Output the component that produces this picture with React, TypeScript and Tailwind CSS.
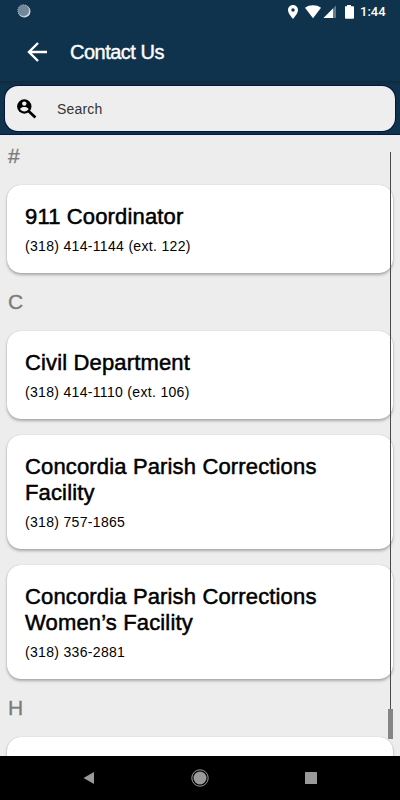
import React from "react";

interface Contact {
  name: string;
  phone: string;
}

interface Section {
  letter: string;
  contacts: Contact[];
}

const sections: Section[] = [
  {
    letter: "#",
    contacts: [{ name: "911 Coordinator", phone: "(318) 414-1144 (ext. 122)" }],
  },
  {
    letter: "C",
    contacts: [
      { name: "Civil Department", phone: "(318) 414-1110 (ext. 106)" },
      { name: "Concordia Parish Corrections Facility", phone: "(318) 757-1865" },
      { name: "Concordia Parish Corrections Women’s Facility", phone: "(318) 336-2881" },
    ],
  },
  { letter: "H", contacts: [{ name: "", phone: "" }] },
];

function StatusBar() {
  return (
    <div className="flex h-6 items-center justify-between pl-[17px] pr-[15px] text-white">
      <svg className="-mt-0.5" width="14" height="14" viewBox="0 0 14 14">
        <circle cx="7.3" cy="7.3" r="6.2" fill="#d3dce2" />
        <circle cx="6.5" cy="6.5" r="5.7" fill="#71889a" />
        <circle cx="6.5" cy="6.5" r="5.7" fill="none" stroke="#a9b7c1" strokeWidth="1" strokeDasharray="1 1" />
      </svg>
      <div className="flex items-center">
        <svg className="-mt-px" width="74" height="16" viewBox="0 0 74 16" fill="currentColor">
          <path
            fillRule="evenodd"
            d="M7 1C4.200 1 2 3.200 2 6c0 3.600 5 9 5 9s5-5.400 5-9c0-2.800-2.200-5-5-5zm0 3.300a1.700 1.700 0 1 1 0 3.400 1.700 1.700 0 0 1 0-3.400z"
          />
          <path d="M19 3.700C21.200 2 24 1.200 27 1.200s5.800.8 8 2.500L27 14.200z" />
          <path d="M50 1.500V14H37.500z" fillOpacity=".35" />
          <path d="M47 4.500V14h-9.500z" />
          <path d="M59 2.300h2V1h4v1.300h2.200a.8.800 0 0 1 .8.800v10.800a.8.800 0 0 1-.8.800h-7.400a.8.800 0 0 1-.8-.8z" />
        </svg>
        <span className="w-[25px] whitespace-nowrap font-[Roboto,sans-serif] text-[13px] font-medium leading-4">
          1:44
        </span>
      </div>
    </div>
  );
}

function SearchBar() {
  return (
    <div className="h-[54px] border-b border-[#06164a] bg-linear-to-b from-[#0e293d] to-[#10334d] to-[4px] px-[5px] pt-[5px]">
      <div className="flex h-[45px] items-center rounded-[13px] bg-[#eeeeee] pl-3 shadow-[0_0_1px_1px_#04153a]">
        <svg width="20" height="20" viewBox="0 0 20 20">
          <path d="M11.500 12L18.400 18.600" stroke="#000" strokeWidth="2.700" />
          <circle cx="7.300" cy="7.500" r="7.200" />
          <circle cx="7.300" cy="4.600" r="2.200" fill="#eee" />
          <path d="M3 10c.6-1.500 2.600-2.100 4.300-2.100s3.700.6 4.300 2.100C10.700 11.500 9.100 12.400 7.300 12.400S3.900 11.500 3 10z" fill="#eee" />
        </svg>
        <span className="ml-5 text-[14px] leading-5 tracking-[0.2px] text-[#333]">Search</span>
      </div>
    </div>
  );
}

function ContactCard({ name, phone }: Contact) {
  return (
    <div className="mx-[7px] mb-4 min-h-[88px] rounded-[14px] bg-white px-[18px] pb-[17px] pt-[19px] shadow-[0_2px_3px_rgba(0,0,0,0.28),0_0_1px_rgba(0,0,0,0.25)]">
      <h2 className="w-[310px] text-[22px] leading-[26px] tracking-[0.15px] text-black [-webkit-text-stroke:0.5px_#000]">
        {name}
      </h2>
      <p className="mt-1.5 text-[14px] leading-5 tracking-[0.32px] text-black">{phone}</p>
    </div>
  );
}

export default function App() {
  return (
    <div className="flex h-[800px] w-[400px] flex-col overflow-hidden bg-[#ededed] font-['Liberation_Sans',Arial,sans-serif]">
      <header className="h-[81px] shrink-0 bg-[#10334d]">
        <StatusBar />
        <div className="flex h-[56px] items-center pl-[27px]">
          <svg width="20" height="20" viewBox="0 0 20 20" fill="none" stroke="#fff" strokeWidth="2.400">
            <path d="M20 10H2M11 1L2 10l9 9" />
          </svg>
          <h1 className="ml-[23px] text-[20px] leading-6 tracking-[-0.5px] text-white [-webkit-text-stroke:0.4px_#fff]">
            Contact Us
          </h1>
        </div>
      </header>
      <SearchBar />

      <main className="relative min-h-0 flex-1 overflow-hidden pt-2">
        {sections.map((section) => (
          <section key={section.letter}>
            <h3 className="h-[42px] pl-2 pt-px text-[21px] leading-6 text-[#7b7b7b] [-webkit-text-stroke:0.3px_#7b7b7b]">
              {section.letter}
            </h3>
            {section.contacts.map((contact) => (
              <ContactCard key={contact.phone} {...contact} />
            ))}
          </section>
        ))}

        {/* scroll track and thumb */}
        <div className="absolute left-[390px] top-[17px] h-[557px] w-px bg-[#4a4a4a]" />
        <div className="absolute left-[388px] top-[574px] h-[30px] w-[5px] bg-[#858585]" />
      </main>

      <nav className="flex h-11 shrink-0 items-center justify-between bg-black px-[83px]">
        <svg width="12" height="14" viewBox="0 0 12 14" fill="#999">
          <path d="M11 1v12L.5 7z" />
        </svg>
        <svg width="18" height="18" viewBox="0 0 18 18">
          <circle cx="9" cy="9" r="8.200" fill="none" stroke="#999" />
          <circle cx="9" cy="9" r="6.500" fill="#999" />
        </svg>
        <svg width="12" height="12" viewBox="0 0 12 12" fill="#999">
          <rect width="12" height="12" rx=".5" />
        </svg>
      </nav>
    </div>
  );
}
